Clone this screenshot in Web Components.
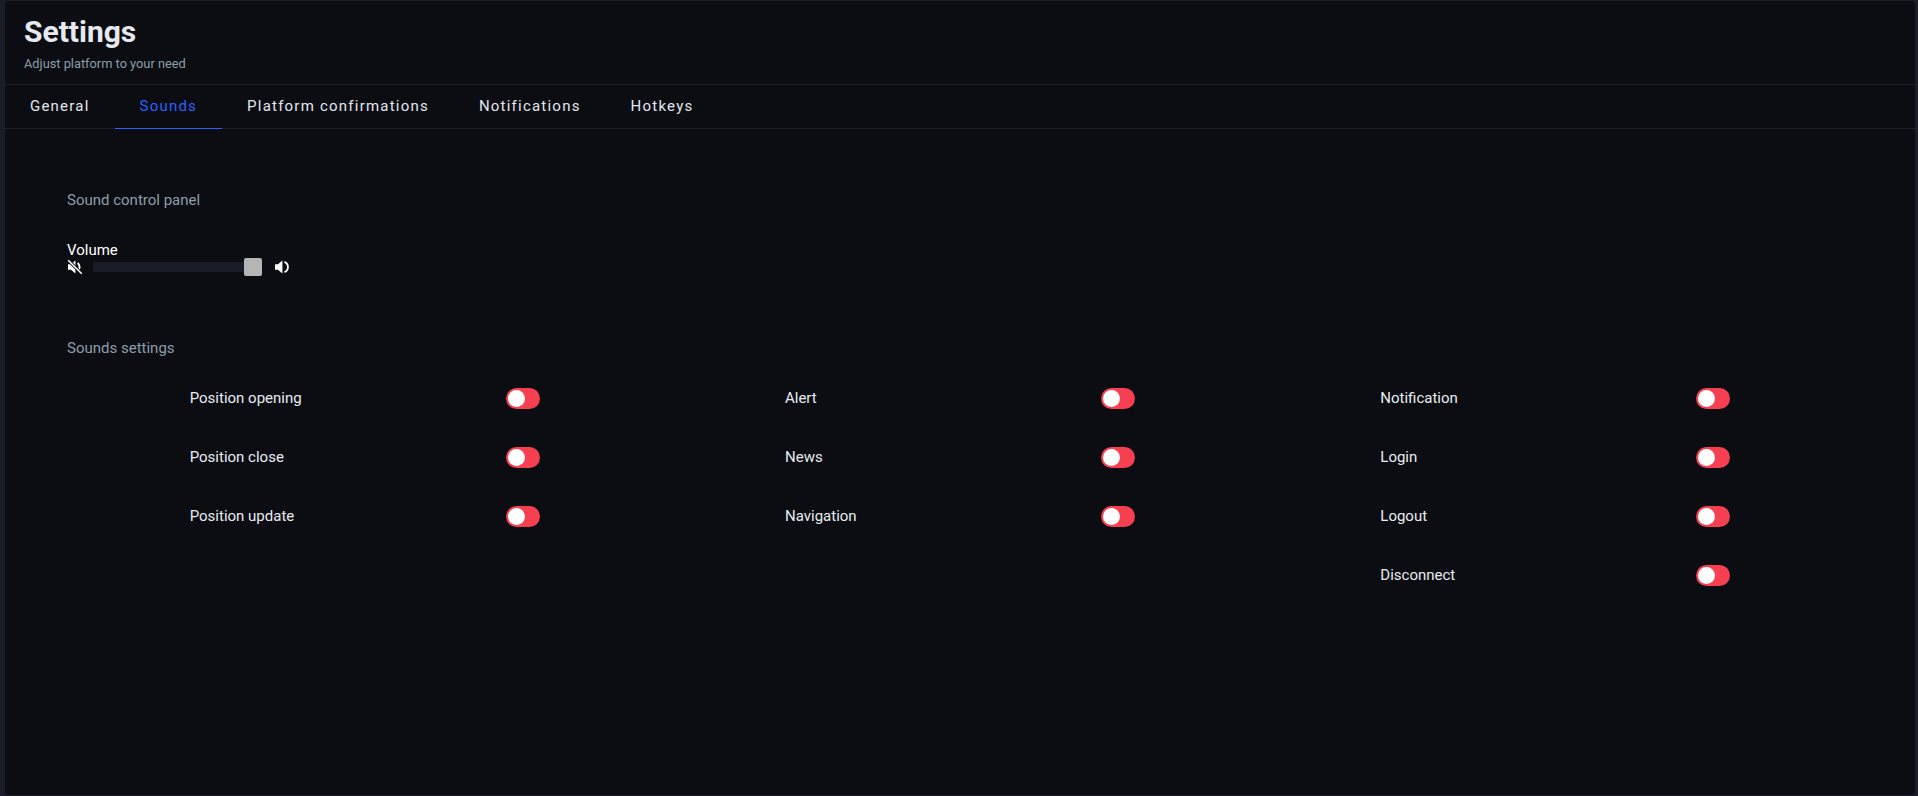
<!DOCTYPE html>
<html>
<head>
<meta charset="utf-8">
<title>Settings</title>
<style>
  html, body { margin: 0; height: 100%; }
  body {
    background: #1a1d27;
    font-family: Roboto, "Liberation Sans", sans-serif;
    overflow: hidden;
  }
</style>
</head>
<body>
<settings-page>
  <settings-header slot="header" title="Settings" subtitle="Adjust platform to your need"></settings-header>
  <settings-tabs slot="tabs" active="Sounds" items="General|Sounds|Platform confirmations|Notifications|Hotkeys"></settings-tabs>
  <section-title>Sound control panel</section-title>
  <volume-control></volume-control>
  <section-title class="second">Sounds settings</section-title>
  <sound-grid>
    <sound-column>
      <sound-row>Position opening</sound-row>
      <sound-row>Position close</sound-row>
      <sound-row>Position update</sound-row>
    </sound-column>
    <sound-column>
      <sound-row>Alert</sound-row>
      <sound-row>News</sound-row>
      <sound-row>Navigation</sound-row>
    </sound-column>
    <sound-column>
      <sound-row>Notification</sound-row>
      <sound-row>Login</sound-row>
      <sound-row>Logout</sound-row>
      <sound-row>Disconnect</sound-row>
    </sound-column>
  </sound-grid>
</settings-page>

<script>
class SettingsPage extends HTMLElement {
  constructor() {
    super();
    this.attachShadow({ mode: 'open' }).innerHTML = `
      <style>
        :host {
          display: block;
          box-sizing: border-box;
          height: 794px;
          margin: 1px 3px 0 5px;
          background: #0c0d13;
          border-radius: 4px;
          overflow: hidden;
        }
        .body { padding: 61px 62px 0; }
      </style>
      <slot name="header"></slot>
      <slot name="tabs"></slot>
      <div class="body"><slot></slot></div>
    `;
  }
}

class SettingsHeader extends HTMLElement {
  constructor() {
    super();
    this.attachShadow({ mode: 'open' }).innerHTML = `
      <style>
        :host {
          display: block;
          box-sizing: border-box;
          height: 83px;
          padding: 13px 19px 0;
          color: #e6eaf0;
        }
        h1 { margin: 0; font-size: 30px; line-height: 36px; font-weight: 700; }
        p { margin: 7px 0 0; font-size: 12.8px; line-height: 14px; color: #8b9dab; }
      </style>
      <h1></h1>
      <p></p>
    `;
    this.shadowRoot.querySelector('h1').textContent = this.getAttribute('title');
    this.shadowRoot.querySelector('p').textContent = this.getAttribute('subtitle');
  }
}

class SettingsTabs extends HTMLElement {
  constructor() {
    super();
    this.attachShadow({ mode: 'open' }).innerHTML = `
      <style>
        :host {
          display: flex;
          box-sizing: border-box;
          height: 45px;
          border-top: 1px solid #1f212b;
          border-bottom: 1px solid #1f212b;
        }
        .tab {
          box-sizing: border-box;
          height: 44px;
          margin-bottom: -1px;
          padding: 0 25px;
          font-size: 15px;
          line-height: 43px;
          font-weight: 400;
          letter-spacing: 1.22px;
          color: #e2e7ee;
          white-space: nowrap;
          border-bottom: 1px solid transparent;
        }
        .tab.active { color: #2962ff; border-bottom-color: #2962ff; }
      </style>
    `;
    const active = this.getAttribute('active');
    this.getAttribute('items').split('|').forEach((name) => {
      const tab = document.createElement('div');
      tab.className = name === active ? 'tab active' : 'tab';
      tab.textContent = name;
      this.shadowRoot.appendChild(tab);
    });
  }
}

class SectionTitle extends HTMLElement {
  constructor() {
    super();
    this.attachShadow({ mode: 'open' }).innerHTML = `
      <style>
        :host {
          display: block;
          font-size: 15px;
          line-height: 20px;
          color: #8b9dab;
          margin-bottom: 31px;
        }
        :host(.second) { margin-bottom: 0; }
      </style>
      <slot></slot>
    `;
  }
}

class VolumeControl extends HTMLElement {
  constructor() {
    super();
    this.attachShadow({ mode: 'open' }).innerHTML = `
      <style>
        :host { display: block; height: 97px; color: #fff; }
        .label { font-size: 15px; line-height: 18px; }
        .row { display: flex; align-items: center; height: 18px; margin-top: -1px; }
        svg { display: block; width: 16px; height: 16px; flex: none; fill: #fff; }
        .track {
          position: relative;
          width: 169px;
          height: 10px;
          margin: 0 13px 0 10px;
          background: #1a1c27;
        }
        .thumb {
          position: absolute;
          top: -4px;
          right: 0;
          width: 18px;
          height: 18px;
          border-radius: 2px;
          background: #b5b5b8;
        }
      </style>
      <div class="label">Volume</div>
      <div class="row">
        <svg viewBox="0 0 16 16"><path d="M1 5.2h3L8.4 1.6v12.8L4 10.8H1z"/><path d="M10.6 4a5 5 0 0 1 0 8" fill="none" stroke="#fff" stroke-width="2"/><path d="M1.2 1.2l13.6 13.6" stroke="#0c0d13" stroke-width="3.2"/><path d="M1.2 1.2l13.6 13.6" stroke="#fff" stroke-width="1.6"/></svg>
        <div class="track"><div class="thumb"></div></div>
        <svg viewBox="0 0 16 16"><path d="M0 5.2h3L7.4 1.6v12.8L3 10.8H0z"/><path d="M9.4 2.8a5.6 5.6 0 0 1 0 10.4" fill="none" stroke="#fff" stroke-width="1.8"/></svg>
      </div>
    `;
  }
}

class SoundGrid extends HTMLElement {
  constructor() {
    super();
    this.attachShadow({ mode: 'open' }).innerHTML = `
      <style>
        :host {
          display: grid;
          grid-template-columns: repeat(3, 1fr);
          align-items: start;
          padding-top: 30px;
        }
      </style>
      <slot></slot>
    `;
  }
}

class SoundColumn extends HTMLElement {
  constructor() {
    super();
    this.attachShadow({ mode: 'open' }).innerHTML = `
      <style>
        :host {
          display: flex;
          flex-direction: column;
          gap: 38px;
          width: 350px;
          justify-self: center;
        }
      </style>
      <slot></slot>
    `;
  }
}

class SoundRow extends HTMLElement {
  constructor() {
    super();
    this.attachShadow({ mode: 'open' }).innerHTML = `
      <style>
        :host {
          display: flex;
          align-items: center;
          justify-content: space-between;
          height: 21px;
          font-size: 15px;
          color: #e8ecf1;
        }
        span { margin-bottom: 2px; }
      </style>
      <span><slot></slot></span>
      <sound-toggle></sound-toggle>
    `;
  }
}

class SoundToggle extends HTMLElement {
  constructor() {
    super();
    this.attachShadow({ mode: 'open' }).innerHTML = `
      <style>
        :host {
          display: block;
          box-sizing: border-box;
          width: 34px;
          height: 21px;
          padding: 2px;
          border-radius: 11px;
          background: #f73f52;
        }
        .knob { width: 17px; height: 17px; border-radius: 50%; background: #fff; }
      </style>
      <div class="knob"></div>
    `;
  }
}

customElements.define('settings-page', SettingsPage);
customElements.define('settings-header', SettingsHeader);
customElements.define('settings-tabs', SettingsTabs);
customElements.define('section-title', SectionTitle);
customElements.define('volume-control', VolumeControl);
customElements.define('sound-grid', SoundGrid);
customElements.define('sound-column', SoundColumn);
customElements.define('sound-row', SoundRow);
customElements.define('sound-toggle', SoundToggle);
</script>
</body>
</html>
